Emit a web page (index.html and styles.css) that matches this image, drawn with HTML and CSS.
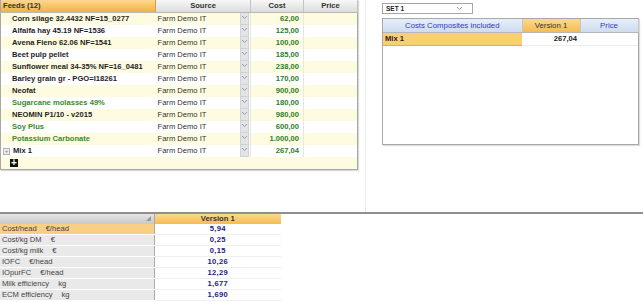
FILE: index.html
```html
<!DOCTYPE html>
<html lang="en">
<head>
    <meta charset="UTF-8">
    <title>Feeds costs</title>
    <link rel="stylesheet" href="styles.css">
</head>
<body>
    <div class="top">
        <div class="feeds-pane">
            <table class="feeds">
                <colgroup>
                    <col class="c-name"><col class="c-src"><col class="c-arrow"><col class="c-cost"><col class="c-price">
                </colgroup>
                <thead>
                    <tr>
                        <th class="h-feeds">Feeds (12)</th>
                        <th colspan="2">Source</th>
                        <th>Cost</th>
                        <th>Price</th>
                    </tr>
                </thead>
                <tbody id="feed-rows"></tbody>
            </table>
        </div>
        <div class="right-pane">
            <div class="set-select">
                <span>SET 1</span>
                <svg class="chev" width="7" height="5" viewBox="0 0 7 5"><polyline points="1,1 3.5,3.5 6,1" fill="none" stroke="#8a98a8" stroke-width="1"/></svg>
            </div>
            <div class="composites">
                <table>
                    <colgroup><col class="k-name"><col class="k-ver"><col class="k-price"></colgroup>
                    <thead>
                        <tr>
                            <th class="blue">Costs Composites included</th>
                            <th class="ver">Version 1</th>
                            <th class="blue">Price</th>
                        </tr>
                    </thead>
                    <tbody>
                        <tr>
                            <td class="mix">Mix 1</td>
                            <td class="val">267,04</td>
                            <td></td>
                        </tr>
                    </tbody>
                </table>
            </div>
        </div>
    </div>
    <div class="bottom">
        <table class="results">
            <colgroup><col class="r-label"><col class="r-val"></colgroup>
            <thead>
                <tr>
                    <th class="grip-cell"><span class="grip"></span></th>
                    <th class="ver">Version 1</th>
                </tr>
            </thead>
            <tbody id="result-rows"></tbody>
        </table>
    </div>

    <script>
        const feeds = [
            { name: 'Corn silage 32.4432 NF=15_0277', cost: '62,00' },
            { name: 'Alfalfa hay 45.19 NF=1536', cost: '125,00' },
            { name: 'Avena Fieno 62.06 NF=1541', cost: '100,00' },
            { name: 'Beet pulp pellet', cost: '185,00' },
            { name: 'Sunflower meal 34-35% NF=16_0481', cost: '238,00' },
            { name: 'Barley grain gr - PGO=I18261', cost: '170,00' },
            { name: 'Neofat', cost: '900,00' },
            { name: 'Sugarcane molasses 49%', cost: '180,00', green: true },
            { name: 'NEOMIN P1/10 - v2015', cost: '980,00' },
            { name: 'Soy Plus', cost: '600,00', green: true },
            { name: 'Potassium Carbonate', cost: '1.000,00', green: true },
            { name: 'Mix 1', cost: '267,04', mix: true }
        ];

        const results = [
            ['Cost/head', '€/head', '5,94'],
            ['Cost/kg DM', '€', '0,25'],
            ['Cost/kg milk', '€', '0,15'],
            ['IOFC', '€/head', '10,26'],
            ['IOpurFC', '€/head', '12,29'],
            ['Milk efficiency', 'kg', '1,677'],
            ['ECM efficiency', 'kg', '1,690']
        ];

        const chevron = '<svg width="7" height="5" viewBox="0 0 7 5"><polyline points="1,1 3.5,3.5 6,1" fill="none" stroke="#8a98a8" stroke-width="1"/></svg>';

        const feedRows = document.getElementById('feed-rows');
        feeds.forEach((f, i) => {
            const tr = document.createElement('tr');
            tr.className = i % 2 === 0 ? 'odd' : 'even';
            const icon = f.mix ? '<span class="expand">+</span>' : '';
            tr.innerHTML =
                `<td class="name${f.green ? ' green' : ''}${f.mix ? ' mixname' : ''}">${icon}${f.name}</td>` +
                `<td class="src">Farm Demo IT</td>` +
                `<td class="arrow"><span class="arrow-btn">${chevron}</span></td>` +
                `<td class="cost">${f.cost}</td>` +
                `<td></td>`;
            feedRows.appendChild(tr);
        });
        // riga per aggiungere un alimento
        const addRow = document.createElement('tr');
        addRow.className = 'odd';
        addRow.innerHTML = '<td class="name"><span class="add">+</span></td><td></td><td></td><td></td><td></td>';
        feedRows.appendChild(addRow);

        const resultRows = document.getElementById('result-rows');
        results.forEach((r, i) => {
            const tr = document.createElement('tr');
            if (i === 0) tr.className = 'selected';
            tr.innerHTML = `<td class="label">${r[0]}<span class="unit">${r[1]}</span></td><td class="num">${r[2]}</td>`;
            resultRows.appendChild(tr);
        });
    </script>
</body>
</html>
```

FILE: styles.css
```css
body {
    margin: 0;
    padding: 0;
    font-family: "Liberation Sans", Arial, sans-serif;
    font-size: 7.6px;
    color: #222;
    background-color: #fff;
}

table {
    border-collapse: collapse;
    table-layout: fixed;
}

th, td {
    padding: 0;
    white-space: nowrap;
    overflow: hidden;
}

/* Parte superiore */
.top {
    display: flex;
    height: 212px;
    border-bottom: 2px solid #8f8f8f;
}

.feeds-pane {
    width: 366px;
    border-right: 1px solid #ececec;
}

.feeds {
    width: 357px;
    border: 1px solid #a8a8a8;
    border-top: none;
    box-shadow: 1px 1px 1px #d8d8d8;
}

.c-name { width: 155px; }
.c-src { width: 83px; }
.c-arrow { width: 12px; }
.c-cost { width: 53px; }
.c-price { width: 54px; }

.feeds th {
    height: 12px;
    line-height: 12px;
    font-weight: bold;
    color: #333;
    background: linear-gradient(#f7f7f7, #dcdcdc);
    border-right: 1px solid #c4c4c4;
    border-bottom: 1px solid #b8b8b8;
    text-align: center;
}

.feeds th.h-feeds {
    text-align: left;
    padding-left: 2px;
    background: linear-gradient(#fcd790, #f2b244);
    border-right: 1px solid #d9a040;
}

.feeds td {
    height: 12px;
    line-height: 12px;
}

.feeds tr.odd td { background-color: #fefce0; }
.feeds tr.even td { background-color: #ffffff; }

.feeds td.name {
    font-weight: bold;
    padding-left: 11px;
    color: #1e1e1e;
}

.feeds td.name.green { color: #3b8a2e; }

.feeds td.mixname { padding-left: 2px; }

.expand {
    display: inline-block;
    width: 5px;
    height: 5px;
    line-height: 5px;
    font-size: 6px;
    text-align: center;
    color: #888;
    border: 1px solid #b0b0b0;
    background-color: #f0f0f0;
    margin-right: 3px;
    vertical-align: 0;
}

.add {
    display: inline-block;
    width: 8px;
    height: 8px;
    line-height: 8px;
    margin-left: -2px;
    margin-top: 2px;
    background-color: #111;
    color: #fff;
    font-size: 10px;
    font-weight: bold;
    text-align: center;
    vertical-align: top;
}

.feeds td.src {
    padding-left: 2px;
    color: #333;
}

.feeds td.arrow {
    text-align: center;
}

.arrow-btn {
    display: block;
    height: 11px;
    margin: 0 1px;
    background-color: #e2e4e6;
    border: 1px solid #cfd2d6;
    border-top: none;
    line-height: 9px;
}

.feeds td.cost {
    text-align: right;
    padding-right: 4px;
    font-weight: bold;
    color: #2e7d2e;
    border-left: 1px solid #e6e6e6;
    border-right: 1px solid #e6e6e6;
}

/* Pannello destro */
.right-pane {
    flex: 1;
    padding: 3px 4px 0 16px;
}

.set-select {
    width: 83px;
    height: 9px;
    border: 1px solid #a6a6a6;
    padding: 0 3px;
    display: flex;
    justify-content: space-between;
    align-items: center;
    font-weight: bold;
    font-size: 6.5px;
    margin-bottom: 4px;
}

.set-select .chev {
    margin-right: 6px;
}

.composites {
    width: 255px;
    height: 125px;
    border: 1px solid #a8a8a8;
    box-shadow: 1px 1px 1px #dcdcdc;
}

.composites table {
    width: 255px;
}

.k-name { width: 139px; }
.k-ver { width: 58px; }
.k-price { width: 58px; }

.composites th {
    height: 13px;
    font-weight: normal;
    font-size: 7.8px;
    text-align: center;
    border-bottom: 1px solid #b6b6b6;
    border-right: 1px solid #c6c6c6;
}

.composites th.blue {
    background: linear-gradient(#e6eefa, #cfdcf0);
    color: #3338c8;
}

.composites th.ver,
.results th.ver {
    background: linear-gradient(#fcd98e, #f4bb52);
    color: #333;
}

.composites td {
    height: 12px;
    line-height: 12px;
    border-bottom: 1px solid #ececec;
}

.composites td.mix {
    background-color: #f8d072;
    font-weight: bold;
    padding-left: 2px;
    border-bottom: 1px solid #e0b040;
}

.composites td.val {
    text-align: right;
    padding-right: 3px;
    font-weight: bold;
}

/* Parte inferiore */
.results {
    width: 281px;
}

.r-label { width: 154px; }
.r-val { width: 127px; }

.results th {
    height: 10px;
    line-height: 10px;
    font-weight: bold;
    font-size: 7.6px;
    text-align: center;
}

.results th.grip-cell {
    background: linear-gradient(#e4e4e4, #c8c8c8);
    border-right: 1px solid #aaa;
    text-align: right;
}

.grip {
    display: inline-block;
    width: 0;
    height: 0;
    margin-right: 3px;
    border-left: 5px solid transparent;
    border-bottom: 5px solid #9a9a9a;
}

.results td {
    height: 10px;
    line-height: 10px;
    border-bottom: 1px solid #d4d4d4;
}

.results td.label {
    background-color: #e9e9e9;
    color: #444;
    padding-left: 2px;
    border-right: 1px solid #aaa;
    border-bottom: 1px solid #fff;
}

.results tr.selected td.label {
    background-color: #f9cf86;
}

.unit {
    margin-left: 9px;
}

.results td.num {
    text-align: center;
    font-weight: bold;
    color: #22237e;
    border-bottom: 1px solid #f0f0f0;
    letter-spacing: 0.3px;
}
```
